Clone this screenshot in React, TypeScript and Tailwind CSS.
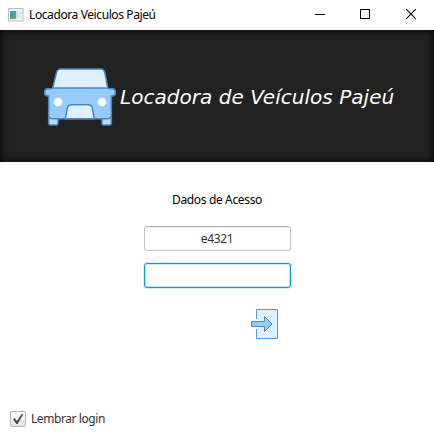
import React from "react";

function AppIcon() {
  return (
    <svg width="16" height="14" viewBox="0 0 16 14" className="ml-2 shrink-0">
      <defs>
        <linearGradient id="pane" x1="0" y1="0" x2="1" y2="1">
          <stop offset="0" stopColor="#4a8cae" />
          <stop offset="1" stopColor="#5fb07e" />
        </linearGradient>
      </defs>
      <rect x="0.5" y="0.5" width="14.5" height="12.5" fill="#f5f5f6" stroke="#b9bdc2" />
      <rect x="2" y="3" width="6" height="8" fill="url(#pane)" />
      <rect x="8" y="3" width="2.5" height="8" fill="#cfe3e2" />
      <rect x="11" y="3" width="3" height="8" fill="#e6e8ea" />
    </svg>
  );
}

function TitleBar() {
  return (
    <header className="flex h-[30px] items-center bg-white">
      <AppIcon />
      <span className="ml-[5px] w-[127px] whitespace-nowrap text-[12px] leading-4 tracking-[-0.4px] text-black">
        Locadora Veiculos Pajeú
      </span>
      <div className="ml-auto flex h-full">
        <svg width="45" height="30" viewBox="0 0 45 30" shapeRendering="crispEdges">
          <path d="M15 14.5H25" stroke="#000" />
        </svg>
        <svg width="45" height="30" viewBox="0 0 45 30" shapeRendering="crispEdges">
          <rect x="15.5" y="9.5" width="9" height="9" fill="none" stroke="#000" />
        </svg>
        <svg width="44" height="30" viewBox="0 0 44 30">
          <path d="M16.2 9.2L25.8 18.8M25.8 9.2L16.2 18.8" stroke="#000" strokeWidth="1.1" />
        </svg>
      </div>
    </header>
  );
}

function CarIcon() {
  return (
    <svg width="72" height="60" viewBox="27 21 216 180" className="ml-11 shrink-0">
      <g stroke="#4788c7" strokeWidth="4.5" strokeLinejoin="round">
        <path d="M41 165H69V190Q69 195 64 195H46Q41 195 41 190Z" fill="#b6dcfe" />
        <path d="M201 165H229V190Q229 195 224 195H206Q201 195 201 190Z" fill="#b6dcfe" />
        <path d="M51 92L65 36Q68 27 77 27H197Q206 27 209 36L220 92Z" fill="#dff0fe" />
        <path
          d="M38 86H48Q53 86 54 84H217Q218 86 223 86H233Q241 87 241 95V99Q241 108 229 108V165Q229 176 218 176H52Q41 176 41 165V108Q29 108 29 99V95Q30 86 38 86Z"
          fill="#98ccfd"
        />
        <path d="M91 176L97 144Q99 134 109 134H160Q170 134 172 144L178 176Z" fill="#dff0fe" />
      </g>
      <circle cx="69" cy="126" r="12.5" fill="#fff" />
      <circle cx="201" cy="126" r="12.5" fill="#fff" />
    </svg>
  );
}

function Banner() {
  return (
    <section className="flex h-[132px] items-center bg-[#222222] pt-[2px] shadow-[inset_0_0_10px_#000]">
      <CarIcon />
      <h1 className="ml-1 whitespace-nowrap font-['Verdana','DejaVu_Sans',sans-serif] text-[20px] italic leading-6 tracking-[0.04px] text-white">
        Locadora de Veículos Pajeú
      </h1>
    </section>
  );
}

function LoginIcon() {
  return (
    <svg width="29" height="31" viewBox="0 0 29 31">
      <path d="M6.5 1.5H27.5V30.5H6.5Z" fill="#dff0fe" stroke="#5b9bd5" />
      <rect x="5" y="11" width="3" height="10" fill="#fff" />
      <path d="M1.5 13.5H14.5V8.5L22 16L14.5 23.5V18.5H1.5Z" fill="#98ccfd" stroke="#4788c7" />
    </svg>
  );
}

export default function App() {
  return (
    <div className="flex h-[439px] w-[434px] flex-col overflow-hidden bg-white font-['Segoe_UI','Noto_Sans',sans-serif]">
      <TitleBar />
      <Banner />
      <main className="flex grow flex-col items-center">
        <p className="mt-[30px] text-[12px] leading-4 tracking-[-0.35px] text-black">Dados de Acesso</p>
        <input
          type="text"
          defaultValue="e4321"
          className="mt-[18px] h-[25px] w-[147px] rounded-[3px] border border-[#c4c4c4] border-t-[#b5b5b5] bg-white text-center text-[12px] tracking-[-0.35px] text-[#323232] shadow-[inset_0_1px_1px_#ececec] outline-none"
        />
        <input
          type="password"
          className="mt-3 h-[25px] w-[147px] rounded-[3px] border border-[#039ed3] bg-white text-center text-[12px] shadow-[0_0_0_1px_#d3eef7,inset_0_0_0_1px_#c5eaf6] outline-none"
        />
        <button type="button" aria-label="Entrar" className="ml-[95px] mt-5">
          <LoginIcon />
        </button>
        <label className="mb-[11px] mt-auto flex items-center self-start pl-[10px]">
          <span className="flex h-4 w-4 items-center justify-center rounded-[2px] border border-[#b5b5b5] bg-linear-to-b from-white to-[#e4e4e4]">
            <svg width="12" height="12" viewBox="0 0 12 12">
              <path d="M1 6.2L2.6 5L5 8L9.6 1L11.3 1.4L5.6 11H4.4Z" fill="#4b4b4b" />
            </svg>
          </span>
          <span className="ml-[5px] text-[12px] leading-[18px] tracking-[-0.42px] text-[#323232]">Lembrar login</span>
        </label>
      </main>
    </div>
  );
}
